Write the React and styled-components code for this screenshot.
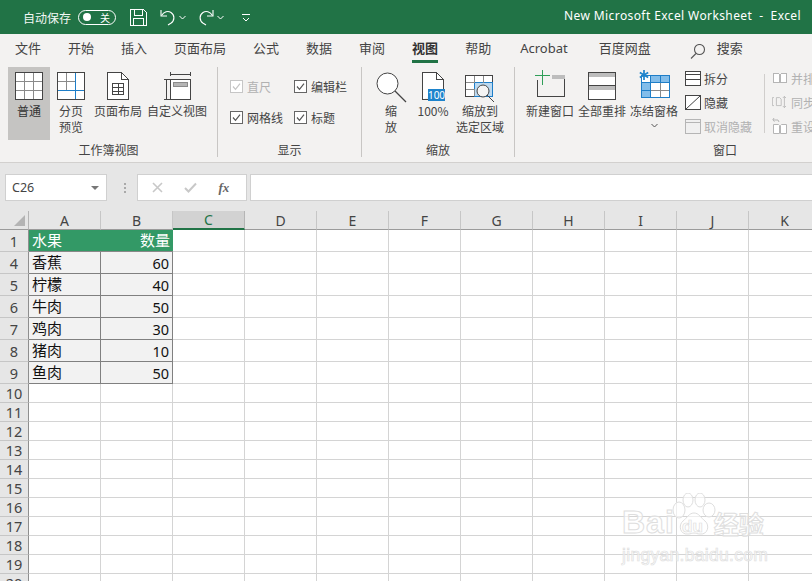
import React from 'react'
import styled, { createGlobalStyle } from 'styled-components'

const FONT = '"Noto Sans", "Noto Sans CJK SC", sans-serif'
const CJK = '"Noto Sans CJK SC", "Noto Sans", sans-serif'

const GlobalStyle = createGlobalStyle`
  html, body { margin: 0; padding: 0; background: #fff; overflow: hidden; }
  * { box-sizing: border-box; }
`

const Page = styled.div`
  position: relative;
  width: 812px;
  height: 581px;
  overflow: hidden;
  display: flex;
  flex-direction: column;
  font-family: ${CJK};
  color: #444;
`

/* title bar */
const TitleBar = styled.div`
  height: 34px;
  flex: none;
  background: #217346;
  color: #fff;
  display: flex;
  align-items: center;
  padding-left: 23px;
`
const AutoSave = styled.span`
  font-size: 12px;
  width: 55px;
  color: #f2f7f4;
`
const Toggle = styled.div`
  width: 38px;
  height: 15px;
  border: 1px solid #fff;
  border-radius: 8px;
  display: flex;
  align-items: center;
  justify-content: space-between;
  padding: 0 5px 0 4px;
  font-size: 10px;
  margin-right: 14px;
  i { width: 8px; height: 8px; border-radius: 50%; background: #fff; }
`
const QatIcon = styled.span`
  display: flex;
  flex: none;
  width: ${p => p.$w}px;
`
const WindowTitle = styled.div`
  margin-left: auto;
  font-family: ${FONT};
  font-size: 12px;
  letter-spacing: 0.4px;
  padding-right: 11px;
  white-space: pre;
  margin-top: -4px;
`

/* tabs */
const Tabs = styled.div`
  height: 26px;
  flex: none;
  background: #f3f2f1;
  display: flex;
  align-items: flex-start;
  padding: 4px 0 0 15px;
`
const Tab = styled.div`
  position: relative;
  font-size: 13px;
  line-height: 19px;
  margin-right: ${p => p.$gap ?? 27}px;
  padding-top: ${p => (p.$latin ? 1 : 0)}px;
  color: ${p => (p.$active ? '#333' : '#444')};
  font-weight: ${p => (p.$active ? 700 : 400)};
  font-family: ${p => (p.$latin ? FONT : CJK)};
  white-space: nowrap;
  svg { display: block; margin-top: 6px; }
  ${p => p.$active && `
    &::after {
      content: '';
      position: absolute;
      left: 0;
      right: 0;
      top: 22px;
      height: 3px;
      background: #217346;
    }
  `}
`

/* ribbon */
const Ribbon = styled.div`
  height: 103px;
  flex: none;
  background: #f3f2f1;
  border-bottom: 1px solid #d2d0ce;
  display: flex;
  align-items: flex-start;
`
const Group = styled.div`
  flex: none;
  width: ${p => p.$w}px;
  height: 90px;
  margin-top: 7px;
  display: flex;
  flex-direction: column;
  border-right: ${p => (p.$last ? 'none' : '1px solid #c8c6c4')};
`
const GroupBody = styled.div`
  height: 78px;
  display: flex;
  padding-left: ${p => p.$pl ?? 0}px;
`
const GroupLabel = styled.div`
  font-size: 12px;
  line-height: 14px;
  text-align: center;
  padding-left: ${p => p.$pl ?? 0}px;
`
const BigButton = styled.div`
  flex: none;
  width: ${p => p.$w}px;
  height: 73px;
  padding-top: 5px;
  display: flex;
  flex-direction: column;
  align-items: center;
  background: ${p => (p.$active ? '#c5c4c2' : 'transparent')};
`
/* icons keep a fixed slot so every label starts on the same line */
const IconSlot = styled.div`
  flex: none;
  height: 28px;
  margin-top: ${p => -(p.$up ?? 0)}px;
  margin-bottom: ${p => p.$up ?? 0}px;
  svg { display: block; overflow: visible; }
`
const BigLabel = styled.div`
  margin-top: 3px;
  font-size: 12px;
  line-height: 16px;
  text-align: center;
  white-space: nowrap;
  color: ${p => (p.$strong ? '#333' : '#444')};
`
const MoreArrow = styled.div`
  margin-top: 4px;
  display: flex;
`
const CheckGrid = styled.div`
  display: grid;
  grid-template-columns: 64px 64px;
  grid-auto-rows: 31px;
  padding: 12px 0 0 12px;
`
const CheckItem = styled.div`
  display: flex;
  align-items: center;
  gap: 4px;
  height: 14px;
  font-size: 12px;
  white-space: nowrap;
  color: ${p => (p.$off ? '#b1b1b1' : '#444')};
`
const CheckBox = styled.span`
  width: 13px;
  height: 13px;
  flex: none;
  display: flex;
  background: #fff;
  border: 1px solid ${p => (p.$off ? '#c6c6c6' : '#666')};
  svg { display: block; }
`
const SmallColumn = styled.div`
  flex: none;
  width: ${p => p.$w}px;
  padding-top: 3px;
  margin-left: ${p => p.$ml ?? 0}px;
  display: flex;
  flex-direction: column;
  gap: 8px;
`
const SmallItem = styled.div`
  display: flex;
  align-items: center;
  height: 16px;
  gap: 3px;
  font-size: 12px;
  white-space: nowrap;
  color: ${p => (p.$off ? '#b1b1b1' : '#444')};
  svg { flex: none; display: block; }
`
const Divider = styled.div`
  flex: none;
  width: 1px;
  height: 59px;
  margin: 7px 0 0 5px;
  background: #d0cecc;
`

/* formula bar */
const FormulaBar = styled.div`
  height: 48px;
  flex: none;
  background: #e6e6e6;
  padding-top: 11px;
  display: flex;
  align-items: flex-start;
`
const NameBox = styled.div`
  width: 102px;
  height: 27px;
  margin-left: 5px;
  background: #fff;
  border: 1px solid #d0d0d0;
  display: flex;
  align-items: center;
  justify-content: space-between;
  padding: 0 7px 0 6px;
  font-family: ${FONT};
  font-size: 12.5px;
  color: #444;
`
const DropArrow = styled.i`
  width: 0;
  height: 0;
  border-left: 4px solid transparent;
  border-right: 4px solid transparent;
  border-top: 4px solid #777;
`
const Grip = styled.div`
  width: 24px;
  height: 27px;
  margin-left: 6px;
  display: flex;
  flex-direction: column;
  align-items: center;
  justify-content: center;
  gap: 2px;
  i { width: 2px; height: 2px; background: #a9a9a9; }
`
const FxBox = styled.div`
  width: 110px;
  height: 27px;
  background: #fff;
  border: 1px solid #d0d0d0;
  display: flex;
  align-items: center;
  justify-content: space-around;
  padding: 0 6px 0 3px;
`
const Fx = styled.span`
  font-family: "Liberation Serif", serif;
  font-style: italic;
  font-weight: 700;
  font-size: 13px;
  color: #666;
`
const FormulaInput = styled.div`
  flex: 1;
  height: 27px;
  margin-left: 3px;
  background: #fff;
  border: 1px solid #d0d0d0;
  border-right: none;
`

/* sheet */
const Sheet = styled.div`
  flex: 1;
  overflow: hidden;
  background: #fff;
  font-family: ${FONT};
`
const Row = styled.div`
  display: flex;
  height: ${p => p.$h}px;
`
const Corner = styled.div`
  position: relative;
  flex: none;
  width: 29px;
  background: #e6e6e6;
  border-right: 1px solid #b5b5b5;
  border-bottom: 1px solid #9b9b9b;
  &::after {
    content: '';
    position: absolute;
    right: 3px;
    bottom: 3px;
    border-left: 11px solid transparent;
    border-bottom: 11px solid #b4b4b4;
  }
`
const ColHead = styled.div`
  flex: none;
  width: 72px;
  display: flex;
  align-items: center;
  justify-content: center;
  font-size: 14px;
  color: ${p => (p.$selected ? '#217346' : '#444')};
  background: ${p => (p.$selected ? '#d2d2d2' : '#e6e6e6')};
  border-right: 1px solid ${p => (p.$selected ? '#b5b5b5' : '#c6c6c6')};
  border-bottom: ${p => (p.$selected ? '2px solid #217346' : '1px solid #9b9b9b')};
`
const RowHead = styled.div`
  flex: none;
  width: 29px;
  display: flex;
  align-items: center;
  justify-content: center;
  font-size: 14.5px;
  color: #444;
  background: #e6e6e6;
  border-right: 1px solid #8e8e8e;
  border-bottom: 1px solid #c6c6c6;
`
const cellSkins = {
  plain: 'background:#fff;border-right:1px solid #d4d4d4;border-bottom:1px solid #d4d4d4;',
  head: 'background:#339966;color:#fff;border-bottom:1px solid #888;',
  data: 'background:#f2f2f2;color:#111;border-right:1px solid #808080;border-bottom:1px solid #808080;',
}
const Cell = styled.div`
  flex: none;
  width: 72px;
  display: flex;
  align-items: center;
  justify-content: ${p => (p.$right ? 'flex-end' : 'flex-start')};
  padding: 0 3px ${p => (p.$num ? 0 : 2)}px;
  font-family: ${p => (p.$num ? FONT : CJK)};
  font-size: ${p => (p.$num ? 14.5 : 15)}px;
  ${p => cellSkins[p.$skin || 'plain']}
`

/* watermark sits over the grid */
const Watermark = styled.div`
  position: absolute;
  left: 622px;
  top: 493px;
  width: 150px;
  height: 72px;
  color: rgba(255, 255, 255, 0.6);
  -webkit-text-stroke: 1px #dedede;
  font-family: "Liberation Sans", sans-serif;
`
const MarkRow = styled.div`
  display: flex;
  align-items: flex-end;
  height: 45px;
  font-size: 32px;
  line-height: 32px;
  font-weight: 700;
  letter-spacing: 1px;
  span { margin-left: 39px; font-family: ${CJK}; font-size: 25px; line-height: 30px; letter-spacing: 0; }
`
const MarkPaw = styled.svg`
  position: absolute;
  left: 50px;
  top: 0;
`
const MarkDu = styled.div`
  position: absolute;
  left: 60px;
  top: 25px;
  font-size: 17px;
  line-height: 18px;
  font-weight: 700;
  -webkit-text-stroke: 0.7px #dedede;
`
const MarkUrl = styled.div`
  margin-top: 7px;
  font-size: 17.5px;
  line-height: 20px;
  letter-spacing: 0.3px;
  white-space: nowrap;
  -webkit-text-stroke: 0.7px #dedede;
`

const Big = ({ w, h = 28, children }) => (
  <svg width={w} height={h} viewBox={`0 0 ${w} ${h}`} fill="none" strokeWidth="1" shapeRendering="crispEdges">
    {children}
  </svg>
)

const Check = ({ off }) => (
  <CheckBox $off={off}>
    <svg width="11" height="11" viewBox="0 0 11 11" fill="none">
      <path d="M2 5.5l2.5 2.8L9 2.6" stroke={off ? '#c4c4c4' : '#555'} strokeWidth="1.2" />
    </svg>
  </CheckBox>
)

const D = '#444'
const G = '#8a8a8a'
const B = '#1e7ec8'

const NormalIcon = () => (
  <Big w={28}>
    <rect x=".5" y=".5" width="27" height="27" stroke={D} fill="#fff" />
    <path d="M9.5 1v26M18.5 1v26M1 9.5h26M1 18.5h26" stroke={G} />
  </Big>
)
const PageBreakIcon = () => (
  <Big w={28}>
    <rect x=".5" y=".5" width="27" height="27" stroke={D} fill="#fff" />
    <path d="M9.5 1v18M1 9.5h18" stroke={G} />
    <path d="M18.5 1v26M1 18.5h26" stroke={B} />
  </Big>
)
const PageLayoutIcon = () => (
  <Big w={22}>
    <path d="M.5.5h14l7 7v20H.5z" stroke={D} fill="#fff" />
    <path d="M14.5 1v6.5H21" stroke={D} />
    <path d="M5.5 11.5h11v11h-11zM5.5 15.5h11M5.5 19.5h11M11.5 12v11" stroke={D} />
  </Big>
)
const CustomViewIcon = () => (
  <Big w={28}>
    <path d="M7.5 0v4M27.5 0v4M8 2.5h20M.5 7.5h6M.5 27.5h6M3.5 8v19" stroke={D} />
    <rect x="7.5" y="7.5" width="20" height="20" stroke={D} fill="#fff" />
    <rect x="10.5" y="10.5" width="14" height="4" stroke={G} fill="#b5b5b5" />
  </Big>
)
const ZoomIcon = () => (
  <svg width="30" height="28" viewBox="0 0 30 28" fill="none">
    <circle cx="11.5" cy="11.5" r="10.5" stroke={D} fill="#fff" />
    <path d="M19 19l11 11" stroke={D} strokeWidth="1.3" />
  </svg>
)
const HundredIcon = () => (
  <Big w={30}>
    <path d="M4.5 27.5V.5h14l7 7v11" stroke={D} fill="#fff" />
    <path d="M4.5 27.5h6M18.5 1v6.5H25" stroke={D} />
    <rect x="10" y="17" width="17" height="12" fill="#1e84cc" />
    <text x="18.5" y="27" fontFamily={FONT} fontSize="10" fill="#fff" textAnchor="middle">100</text>
  </Big>
)
const ZoomSelIcon = () => (
  <svg width="30" height="28" viewBox="0 0 30 28" fill="none">
    <g shapeRendering="crispEdges">
      <rect x=".5" y="3.5" width="27" height="21" stroke={D} fill="#fff" />
      <rect x="9.5" y="10.5" width="18" height="14" stroke="#1e7ec8" fill="#bcd9f0" />
      <path d="M9.5 4v7M18.5 4v7M1 10.5h9M1 17.5h9M9.5 17v7" stroke={G} />
    </g>
    <circle cx="18" cy="19" r="6" stroke={D} fill="#f4f4f4" />
    <path d="M22 23l7 7" stroke={D} />
  </svg>
)
const NewWindowIcon = () => (
  <Big w={31}>
    <path d="M2.5 10v16.5h27V5.5H18" stroke={D} />
    <rect x="17" y="5" width="13" height="4" fill="#bdbdbd" />
    <path d="M7.5 0v15M0 5.5h15" stroke="#2f9e58" />
  </Big>
)
const ArrangeIcon = () => (
  <Big w={28}>
    <rect x=".5" y=".5" width="27" height="27" stroke={D} fill="#fff" />
    <rect x="1" y="1" width="26" height="4" fill="#bdbdbd" />
    <path d="M1 13.5h26" stroke={D} />
    <rect x="1" y="14" width="26" height="4" fill="#bdbdbd" />
  </Big>
)
const FreezeIcon = () => (
  <svg width="31" height="28" viewBox="0 0 31 28" fill="none">
    <g shapeRendering="crispEdges">
      <rect x="2.5" y="5.5" width="28" height="22" stroke={B} fill="#fff" />
      <rect x="3" y="13" width="9" height="14" fill="#82bdea" />
      <rect x="12" y="6" width="18" height="7" fill="#82bdea" />
      <path d="M21.5 13v14M12 20.5h18" stroke={G} />
      <path d="M11.5 6v21M3 12.5h27M21.5 6v7M3 20.5h9" stroke={B} />
    </g>
    <path d="M5 0v10M.8 2.5l8.4 5M9.2 2.5l-8.4 5" stroke="#1e84cc" strokeWidth="1.7" />
  </svg>
)
const SplitIcon = () => (
  <Big w={16} h={15}>
    <rect x=".5" y=".5" width="15" height="14" stroke={D} fill="#fff" />
    <path d="M1 3.5h14M1 8.5h14" stroke={D} />
  </Big>
)
const HideIcon = () => (
  <svg width="16" height="15" viewBox="0 0 16 15" fill="none">
    <rect x=".5" y=".5" width="15" height="14" stroke={D} fill="#fff" />
    <path d="M1 14L15 1" stroke={D} />
  </svg>
)
const UnhideIcon = () => (
  <Big w={16} h={15}>
    <rect x=".5" y=".5" width="15" height="14" stroke="#b5b5b5" fill="#f0f0f0" />
    <path d="M1 3.5h14" stroke="#b5b5b5" />
  </Big>
)
const SideIcon = () => (
  <Big w={16} h={14}>
    <path d="M1.5 2.5h5l1 1v8h-6zM8.5 3.5l1-1h5v9h-6z" stroke="#b5b5b5" fill="#fff" />
  </Big>
)
const SyncIcon = () => (
  <svg width="16" height="16" viewBox="0 0 20 16" fill="none" stroke="#b5b5b5">
    <path d="M2.5 2.5h-2v10h2M5.5 2.5h4l2 2v8h-6zM15.5 1v14M13.5 3l2-2 2 2M13.5 13l2 2 2-2" />
  </svg>
)
const ResetIcon = () => (
  <svg width="16" height="18" viewBox="0 0 16 18" fill="none" stroke="#b5b5b5">
    <path d="M1.5 7.5h5l1 1v8h-6zM8.5 8.5l1-1h5v9h-6z" fill="#fff" />
    <path d="M2 1L.8 3l1.7 1.5M1 3h5l1 2" />
  </svg>
)
const SearchIcon = () => (
  <svg width="16" height="15" viewBox="0 0 16 15" fill="none" stroke="#555" strokeWidth="1.1">
    <circle cx="9.5" cy="5.5" r="5" />
    <path d="M6 9.5L1 14.5" />
  </svg>
)

const QatSave = () => (
  <svg width="17" height="17" viewBox="0 0 17 17" fill="none" stroke="#fff" shapeRendering="crispEdges">
    <path d="M.5.5h13l3 3v13H.5z" />
    <path d="M4.5 1v5.5h8V1M3.5 16v-6.5h10V16" />
  </svg>
)
const QatUndo = () => (
  <svg width="16" height="17" viewBox="0 0 16 17" fill="none" stroke="#fff" strokeWidth="1.1">
    <path d="M1 1v6h6" />
    <path d="M1.5 6.5C4 2.5 8 1.5 11 3.5c4 2.7 3.8 8-.2 10.8L8 16" />
  </svg>
)
const QatRedo = () => (
  <svg width="16" height="17" viewBox="0 0 16 17" fill="none" stroke="#fff" strokeWidth="1.1">
    <path d="M15 1v6H9" />
    <path d="M14.5 6.5C12 2.5 8 1.5 5 3.5c-4 2.7-3.8 8 .2 10.8L8 16" />
  </svg>
)
const Chevron = ({ color = '#fff' }) => (
  <svg width="7" height="5" viewBox="0 0 7 5" fill="none" stroke={color}>
    <path d="M.5 1l3 3 3-3" />
  </svg>
)
const QatMore = () => (
  <svg width="8" height="9" viewBox="0 0 8 9" fill="none" stroke="#fff">
    <path d="M0 1.5h8" />
    <path d="M1 5l3 3 3-3" />
  </svg>
)

const COLS = ['A', 'B', 'C', 'D', 'E', 'F', 'G', 'H', 'I', 'J', 'K']
const EMPTY = COLS.slice(2)
const TABS = ['文件', '开始', '插入', '页面布局', '公式', '数据', '审阅']
const DATA = [
  [4, '香蕉', 60],
  [5, '柠檬', 40],
  [6, '牛肉', 50],
  [7, '鸡肉', 30],
  [8, '猪肉', 10],
  [9, '鱼肉', 50],
]
const BLANK_ROWS = [10, 11, 12, 13, 14, 15, 16, 17, 18, 19, 20]

export default function App() {
  return (
    <Page>
      <GlobalStyle />
      <TitleBar>
        <AutoSave>自动保存</AutoSave>
        <Toggle><i />关</Toggle>
        <QatIcon $w={30}><QatSave /></QatIcon>
        <QatIcon $w={19}><QatUndo /></QatIcon>
        <QatIcon $w={19}><Chevron /></QatIcon>
        <QatIcon $w={19}><QatRedo /></QatIcon>
        <QatIcon $w={25}><Chevron /></QatIcon>
        <QatIcon $w={8}><QatMore /></QatIcon>
        <WindowTitle>New Microsoft Excel Worksheet  -  Excel</WindowTitle>
      </TitleBar>

      <Tabs>
        {TABS.map(t => <Tab key={t}>{t}</Tab>)}
        <Tab $active>视图</Tab>
        <Tab $gap={29}>帮助</Tab>
        <Tab $latin $gap={31}>Acrobat</Tab>
        <Tab $gap={39}>百度网盘</Tab>
        <Tab $gap={11}><SearchIcon /></Tab>
        <Tab>搜索</Tab>
      </Tabs>

      <Ribbon>
        <Group $w={218}>
          <GroupBody $pl={8}>
            <BigButton $w={42} $active><IconSlot><NormalIcon /></IconSlot><BigLabel $strong>普通</BigLabel></BigButton>
            <BigButton $w={42}><IconSlot><PageBreakIcon /></IconSlot><BigLabel>分页<br />预览</BigLabel></BigButton>
            <BigButton $w={52}><IconSlot><PageLayoutIcon /></IconSlot><BigLabel>页面布局</BigLabel></BigButton>
            <BigButton $w={66}><IconSlot><CustomViewIcon /></IconSlot><BigLabel>自定义视图</BigLabel></BigButton>
          </GroupBody>
          <GroupLabel>工作簿视图</GroupLabel>
        </Group>

        <Group $w={144}>
          <GroupBody>
            <CheckGrid>
              <CheckItem $off><Check off />直尺</CheckItem>
              <CheckItem><Check />编辑栏</CheckItem>
              <CheckItem><Check />网格线</CheckItem>
              <CheckItem><Check />标题</CheckItem>
            </CheckGrid>
          </GroupBody>
          <GroupLabel>显示</GroupLabel>
        </Group>

        <Group $w={153}>
          <GroupBody $pl={7}>
            <BigButton $w={44}><IconSlot><ZoomIcon /></IconSlot><BigLabel>缩<br />放</BigLabel></BigButton>
            <BigButton $w={40}><IconSlot><HundredIcon /></IconSlot><BigLabel>100%</BigLabel></BigButton>
            <BigButton $w={54}><IconSlot><ZoomSelIcon /></IconSlot><BigLabel>缩放到<br />选定区域</BigLabel></BigButton>
          </GroupBody>
          <GroupLabel>缩放</GroupLabel>
        </Group>

        <Group $w={300} $last>
          <GroupBody $pl={9}>
            <BigButton $w={52}><IconSlot $up={2}><NewWindowIcon /></IconSlot><BigLabel>新建窗口</BigLabel></BigButton>
            <BigButton $w={52}><IconSlot><ArrangeIcon /></IconSlot><BigLabel>全部重排</BigLabel></BigButton>
            <BigButton $w={52}>
              <IconSlot $up={2}><FreezeIcon /></IconSlot>
              <BigLabel>冻结窗格</BigLabel>
              <MoreArrow><Chevron color="#555" /></MoreArrow>
            </BigButton>
            <SmallColumn $w={74} $ml={5}>
              <SmallItem><SplitIcon />拆分</SmallItem>
              <SmallItem><HideIcon />隐藏</SmallItem>
              <SmallItem $off><UnhideIcon />取消隐藏</SmallItem>
            </SmallColumn>
            <Divider />
            <SmallColumn $w={50} $ml={7}>
              <SmallItem $off><SideIcon />并排</SmallItem>
              <SmallItem $off><SyncIcon />同步</SmallItem>
              <SmallItem $off><ResetIcon />重设</SmallItem>
            </SmallColumn>
          </GroupBody>
          <GroupLabel $pl={120}>窗口</GroupLabel>
        </Group>
      </Ribbon>

      <FormulaBar>
        <NameBox>C26<DropArrow /></NameBox>
        <Grip><i /><i /><i /></Grip>
        <FxBox>
          <svg width="11" height="11" viewBox="0 0 11 11" fill="none" stroke="#c8c8c8" strokeWidth="1.6">
            <path d="M1 1l9 9M10 1l-9 9" />
          </svg>
          <svg width="13" height="11" viewBox="0 0 13 11" fill="none" stroke="#c8c8c8" strokeWidth="2">
            <path d="M1 6l3.5 3.5L12 1.5" />
          </svg>
          <Fx>fx</Fx>
        </FxBox>
        <FormulaInput />
      </FormulaBar>

      <Sheet>
        <Row $h={19}>
          <Corner />
          {COLS.map(c => <ColHead key={c} $selected={c === 'C'}>{c}</ColHead>)}
        </Row>
        <Row $h={22}>
          <RowHead>1</RowHead>
          <Cell $skin="head">水果</Cell>
          <Cell $skin="head" $right>数量</Cell>
          {EMPTY.map(c => <Cell key={c} />)}
        </Row>
        {DATA.map(([n, name, qty]) => (
          <Row $h={22} key={n}>
            <RowHead>{n}</RowHead>
            <Cell $skin="data">{name}</Cell>
            <Cell $skin="data" $right $num>{qty}</Cell>
            {EMPTY.map(c => <Cell key={c} />)}
          </Row>
        ))}
        {BLANK_ROWS.map(n => (
          <Row $h={19} key={n}>
            <RowHead>{n}</RowHead>
            {COLS.map(c => <Cell key={c} />)}
          </Row>
        ))}
      </Sheet>

      <Watermark>
        <MarkPaw width="44" height="45" viewBox="0 0 44 45" fill="rgba(255,255,255,0.6)" stroke="#dedede">
          <ellipse cx="7" cy="17" rx="6" ry="8" />
          <ellipse cx="16" cy="7" rx="5" ry="7" />
          <ellipse cx="28" cy="7" rx="5" ry="7" />
          <ellipse cx="37" cy="17" rx="6" ry="7" />
          <path d="M22 20c5 0 7 5 11 8 5 4 3 14-5 13-3 0-4-1-6-1s-3 1-6 1c-8 1-10-9-5-13 4-3 6-8 11-8z" />
        </MarkPaw>
        <MarkDu>du</MarkDu>
        <MarkRow>Bai<span>经验</span></MarkRow>
        <MarkUrl>jingyan.baidu.com</MarkUrl>
      </Watermark>
    </Page>
  )
}
